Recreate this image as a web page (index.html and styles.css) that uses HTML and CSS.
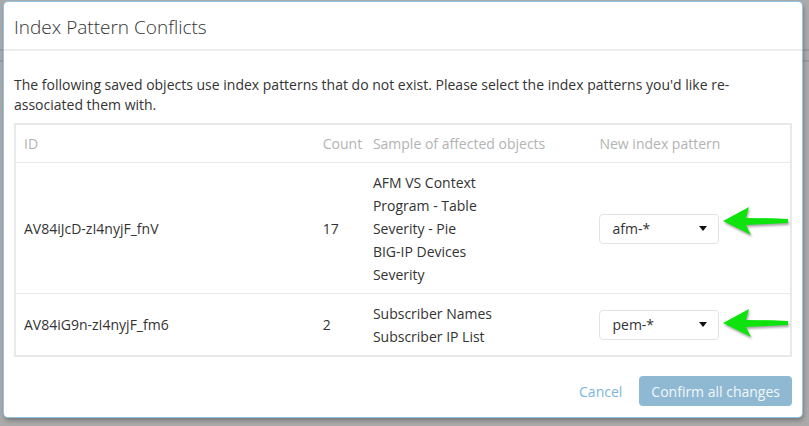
FILE: index.html
```html
<!DOCTYPE html>
<html>
<head>
<meta charset="utf-8">
<link rel="stylesheet" href="styles.css">
</head>
<body>
<div class="backdrop">
  <div class="bg-line bg-line-1"></div>
  <div class="bg-line bg-line-2"></div>
  <div class="modal">
    <div class="modal-header">
      <h1 class="modal-title">Index Pattern Conflicts</h1>
    </div>
    <div class="modal-body">
      <p class="intro">The following saved objects use index patterns that do not exist. Please select the index patterns you'd like re-associated them with.</p>
      <table class="conflicts">
        <colgroup>
          <col class="c-id"><col class="c-count"><col class="c-sample"><col class="c-new">
        </colgroup>
        <thead>
          <tr>
            <th>ID</th>
            <th>Count</th>
            <th>Sample of affected objects</th>
            <th>New index pattern</th>
          </tr>
        </thead>
        <tbody>
          <tr class="row-1">
            <td>AV84iJcD-zI4nyjF_fnV</td>
            <td>17</td>
            <td>
              <div class="obj">AFM VS Context</div>
              <div class="obj">Program - Table</div>
              <div class="obj">Severity - Pie</div>
              <div class="obj">BIG-IP Devices</div>
              <div class="obj">Severity</div>
            </td>
            <td>
              <div class="pick">
                <div class="select"><span>afm-*</span><span class="caret"></span></div>
                <svg class="arrow arrow-1" viewBox="0 0 70 30" width="70" height="30"><path d="M0 15 L26 1 L23 12 Q44 12 65 13 L65 17 Q44 18 23 19 L28 29 Z" fill="#0ee30e"/></svg>
              </div>
            </td>
          </tr>
          <tr class="row-2">
            <td>AV84iG9n-zI4nyjF_fm6</td>
            <td>2</td>
            <td>
              <div class="obj">Subscriber Names</div>
              <div class="obj">Subscriber IP List</div>
            </td>
            <td>
              <div class="pick">
                <div class="select"><span>pem-*</span><span class="caret"></span></div>
                <svg class="arrow arrow-2" viewBox="0 0 70 30" width="70" height="30"><path d="M0 15 L26 1 L23 12 Q44 12 65 13 L65 17 Q44 18 23 19 L28 29 Z" fill="#0ee30e"/></svg>
              </div>
            </td>
          </tr>
        </tbody>
      </table>
    </div>
    <div class="modal-footer">
      <a class="cancel">Cancel</a>
      <button class="confirm">Confirm all changes</button>
    </div>
  </div>
</div>
</body>
</html>
```

FILE: styles.css
```css
html, body {
  margin: 0;
  padding: 0;
}
body {
  width: 809px;
  height: 426px;
  background: #aaaaaa;
  font-family: "Open Sans", "Noto Sans", sans-serif;
  overflow: hidden;
}
.backdrop {
  position: relative;
  width: 809px;
  height: 426px;
  padding-top: 2px;
  box-sizing: border-box;
}
.bg-line {
  position: absolute;
  left: 0;
  right: 0;
  height: 2px;
  background: #9a9a9a;
}
.bg-line-1 { top: 49px; }
.bg-line-2 { top: 60px; }
.modal {
  position: relative;
  margin-left: 4px;
  width: 798px;
  height: 415px;
  background: #fff;
  border-radius: 4px;
  box-shadow: 0 0 0 1px #8fc4e3, 1px 3px 5px rgba(0, 0, 0, 0.35);
  box-sizing: border-box;
}
.modal-header {
  padding: 11px 10px 8px;
  border-bottom: 2px solid #ececec;
}
.modal-title {
  margin: 0;
  font-size: 19px;
  font-weight: 300;
  line-height: 28px;
  color: #333;
}
.modal-body {
  padding: 24px 10px 0;
}
.intro {
  margin: 0 0 8px;
  font-size: 14px;
  line-height: 20px;
  color: #333;
}
.conflicts {
  width: 778px;
  border-collapse: collapse;
  border: 2px solid #e9e9e9;
  table-layout: fixed;
  font-size: 14px;
  color: #333;
}
.c-id { width: 299px; }
.c-count { width: 50px; }
.c-sample { width: 226px; }
.c-new { width: 199px; }
.conflicts th {
  text-align: left;
  font-weight: 400;
  color: #b3b3b3;
  height: 37px;
  padding: 0 0 0 8px;
  border-bottom: 1px solid #e9e9e9;
  white-space: nowrap;
}
.conflicts td {
  padding: 7px 0 7px 8px;
  vertical-align: middle;
  line-height: 23px;
  white-space: nowrap;
}
.row-1 td {
  padding-top: 8px;
  border-bottom: 1px solid #e9e9e9;
}
.row-2 td { height: 47px; }
.pick {
  position: relative;
  width: 120px;
}
.select {
  display: flex;
  align-items: center;
  justify-content: space-between;
  height: 28px;
  padding: 0 11px 0 12px;
  box-sizing: content-box;
  width: 95px;
  border: 1px solid #e3e3e3;
  border-radius: 4px;
  color: #333;
  line-height: 28px;
}
.caret {
  width: 0;
  height: 0;
  border-left: 4px solid transparent;
  border-right: 4px solid transparent;
  border-top: 5px solid #111;
}
.arrow {
  position: absolute;
  left: 124px;
  filter: drop-shadow(1px 2px 1px rgba(0, 0, 0, 0.35));
}
.arrow-1 { top: -8px; }
.arrow-2 { top: -2px; }
.modal-footer {
  display: flex;
  justify-content: flex-end;
  align-items: center;
  gap: 17px;
  padding: 19px 10px 0;
}
.cancel {
  font-size: 14px;
  color: #7db4dc;
}
.confirm {
  height: 30px;
  padding: 0 12px;
  border: none;
  border-radius: 4px;
  background: #8fb9d3;
  color: #f2f7fa;
  font-family: "Open Sans", "Noto Sans", sans-serif;
  font-size: 14px;
}
```
